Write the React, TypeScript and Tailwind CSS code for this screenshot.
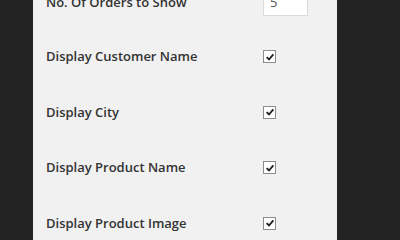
import type { ReactNode } from "react";

const rows = [
  "Display Customer Name",
  "Display City",
  "Display Product Name",
  "Display Product Image",
];

function Check() {
  return (
    <span className="flex h-[13px] w-[13px] items-center justify-center border border-[#8c8c8c] bg-white">
      <svg viewBox="0 0 12 12" className="h-[10px] w-[10px]">
        <path d="M2 6.2 L4.8 9 L10 2.8" fill="none" stroke="#1e1e1e" strokeWidth="2.2" />
      </svg>
    </span>
  );
}

function Row({ label, first, children }: { label: string; first?: boolean; children: ReactNode }) {
  return (
    <div className={`flex items-center ${first ? "h-[53px]" : "h-[55.5px]"}`}>
      <span className="w-[217px] text-[13px] font-semibold text-[#333]">{label}</span>
      {children}
    </div>
  );
}

export default function App() {
  return (
    <div
      className="flex h-[240px] w-[400px] overflow-hidden bg-[#232323]"
      style={{ fontFamily: '"Open Sans", "Liberation Sans", sans-serif' }}
    >
      <div className="ml-[33px] w-[304px] bg-[#f1f1f1] pl-[13px]">
        <div className="-mt-[24px]">
          <Row label="No. Of Orders to Show" first>
            <span className="flex h-[26px] w-[45px] items-center border border-[#dcdcdc] bg-white pl-[6px] text-[13px] text-[#555]">
              5
            </span>
          </Row>
          {rows.map((r) => (
            <Row key={r} label={r}>
              <Check />
            </Row>
          ))}
        </div>
      </div>
    </div>
  );
}
